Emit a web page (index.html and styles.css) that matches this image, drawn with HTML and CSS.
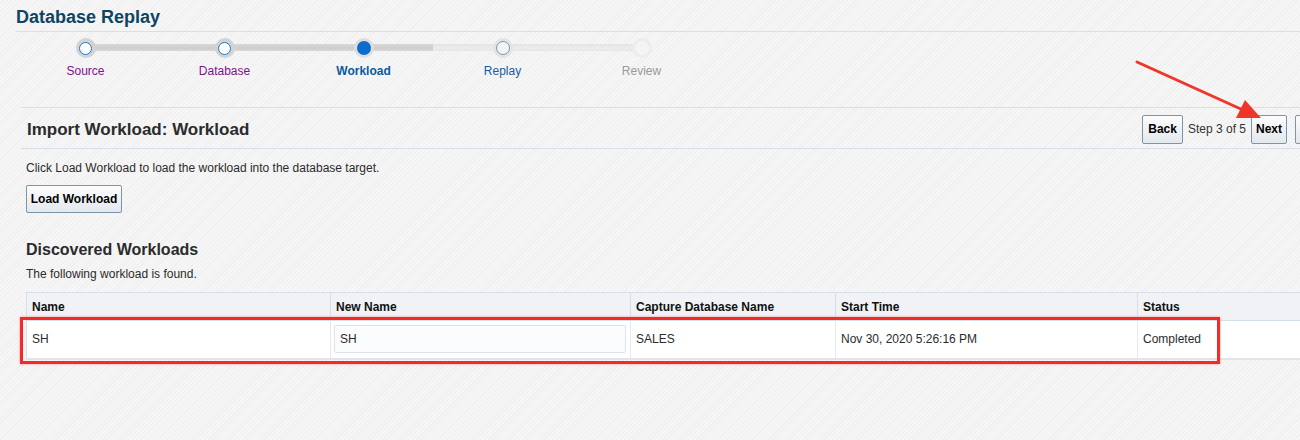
FILE: index.html
```html
<!DOCTYPE html>
<html>
<head>
<meta charset="utf-8">
<link rel="stylesheet" href="styles.css">
</head>
<body>
<div class="page">
  <h1 class="app-title">Database Replay</h1>
  <div class="train">
    <div class="step done first"><span class="dot"></span><span class="lbl">Source</span></div>
    <div class="step done"><span class="dot"></span><span class="lbl">Database</span></div>
    <div class="step current"><span class="dot"></span><span class="lbl">Workload</span></div>
    <div class="step next"><span class="dot"></span><span class="lbl">Replay</span></div>
    <div class="step off last"><span class="dot"></span><span class="lbl">Review</span></div>
  </div>
  <div class="head-row">
    <h2 class="page-title">Import Workload: Workload</h2>
    <div class="nav">
      <button class="btn">Back</button>
      <span class="step-of">Step 3 of 5</span>
      <button class="btn btn-next">Next</button>
      <button class="btn btn-cut" aria-label="Finish"></button>
    </div>
  </div>
  <div class="content">
    <p class="txt first-txt">Click Load Workload to load the workload into the database target.</p>
    <button class="btn btn-load">Load Workload</button>
    <h3 class="sub-title">Discovered Workloads</h3>
    <p class="txt">The following workload is found.</p>
    <div class="table-wrap">
      <table class="grid">
        <colgroup>
          <col class="c1"><col class="c2"><col class="c3"><col class="c4"><col class="c5">
        </colgroup>
        <thead>
          <tr><th>Name</th><th>New Name</th><th>Capture Database Name</th><th>Start Time</th><th>Status</th></tr>
        </thead>
        <tbody>
          <tr>
            <td>SH</td>
            <td><div class="inp">SH</div></td>
            <td>SALES</td>
            <td>Nov 30, 2020 5:26:16 PM</td>
            <td>Completed</td>
          </tr>
        </tbody>
      </table>
      <div class="highlight"></div>
    </div>
  </div>
  <svg class="arrow" width="1300" height="440" viewBox="0 0 1300 440">
    <line x1="1137" y1="62" x2="1243" y2="110" stroke="#f0352b" stroke-width="3" stroke-linecap="round"/>
    <polygon points="1261,118 1236,118 1245,100" fill="#f0352b"/>
  </svg>
</div>
</body>
</html>
```
FILE: styles.css
```css
html, body {
  margin: 0;
  padding: 0;
  overflow: hidden;
}
body {
  font-family: "Liberation Sans", Arial, sans-serif;
  color: #333;
  background-color: #f4f4f4;
  background-image: repeating-linear-gradient(135deg, #f6f6f6 0px, #f6f6f6 2px, #efefef 2px, #efefef 3px);
  width: 1340px;
  height: 440px;
}
.page {
  position: relative;
  width: 1340px;
  height: 440px;
}
.app-title {
  margin: 0 0 0 16px;
  padding-top: 6px;
  height: 25px;
  font-size: 18px;
  line-height: 22px;
  font-weight: bold;
  color: #0e4463;
  border-bottom: 1px solid #d5e0ea;
}
.train {
  display: flex;
  padding: 6px 0 0 16px;
  height: 69px;
  box-sizing: content-box;
}
.step {
  width: 139px;
  position: relative;
  display: flex;
  flex-direction: column;
  align-items: center;
}
.step::before, .step::after {
  content: "";
  position: absolute;
  top: 6px;
  height: 7px;
  width: 50%;
  background: linear-gradient(#d8d8d8, #cdcdcd 60%, #d9d9d9);
}
.step::before { left: 0; }
.step::after { right: 0; }
.step.first::before, .step.last::after { display: none; }
.step.next::before, .step.next::after, .step.off::before {
  background: linear-gradient(#e4e4e4, #ececec 60%, #e6e6e6);
}
.dot {
  position: relative;
  z-index: 1;
  width: 20px;
  height: 20px;
  border-radius: 50%;
  background: #d3d3d3;
  display: flex;
  align-items: center;
  justify-content: center;
}
.dot::after {
  content: "";
  width: 11px;
  height: 11px;
  border-radius: 50%;
  background: #fff;
  border: 1.5px solid #137cd6;
}
.current .dot { background: #dedede; }
.current .dot::after {
  width: 14px;
  height: 14px;
  border: none;
  background: #0b6ccc;
}
.next .dot { background: #e4e4e4; }
.next .dot::after {
  border: 1px solid #7f95ad;
  background: #f2f4f7;
  width: 12px;
  height: 12px;
}
.off .dot { background: #ececec; }
.off .dot::after {
  border: none;
  background: #f3f4f6;
  width: 14px;
  height: 14px;
}
.lbl {
  margin-top: 6px;
  font-size: 12px;
  line-height: 14px;
}
.done .lbl { color: #7e1386; }
.current .lbl { color: #0a5a9c; font-weight: bold; }
.next .lbl { color: #1a5c9c; }
.off .lbl { color: #9a9a9a; }

.head-row {
  margin-left: 21px;
  border-top: 1px solid #d5e0ea;
  border-bottom: 1px solid #d5e0ea;
  height: 40px;
  display: flex;
  align-items: center;
  justify-content: space-between;
}
.page-title {
  margin: 0 0 0 6px;
  padding-top: 3px;
  font-size: 17px;
  font-weight: bold;
  color: #2b2b2b;
}
.nav {
  display: flex;
  align-items: center;
  margin-right: 15px;
  padding-top: 2px;
}
.btn {
  font-family: "Liberation Sans", Arial, sans-serif;
  font-size: 12px;
  font-weight: bold;
  color: #000;
  height: 29px;
  padding: 0 5px;
  border: 1px solid #7d95ab;
  border-radius: 2px;
  background: linear-gradient(#fbfcfd, #e3e8ed);
}
.btn-next {
  padding: 0 4px;
}
.step-of {
  font-size: 12px;
  color: #333;
  margin: 0 5px;
}
.btn-cut {
  margin-left: 8px;
  width: 30px;
}
.content {
  padding-left: 26px;
}
.txt {
  margin: 0;
  font-size: 12px;
  line-height: 14px;
  color: #2b2b2b;
}
.first-txt { padding-top: 12px; }
.btn-load {
  margin-top: 10px;
  height: 28px;
  width: 96px;
  padding: 0;
}
.sub-title {
  margin: 27px 0 7px;
  font-size: 16px;
  line-height: 20px;
  font-weight: bold;
  color: #2b2b2b;
}
.table-wrap {
  position: relative;
  margin-top: 11px;
  width: 1320px;
}
.grid {
  border-collapse: collapse;
  table-layout: fixed;
  width: 1304px;
  font-size: 12px;
  border-left: 1px solid #d5dfe7;
}
.c1 { width: 304px; }
.c2 { width: 300px; }
.c3 { width: 205px; }
.c4 { width: 302px; }
.c5 { width: 193px; }
.grid th {
  text-align: left;
  height: 28px;
  padding: 1px 5px 0;
  background: #f0f2f5;
  color: #111;
  font-weight: bold;
  border: 1px solid #d5dfe7;
  border-left: none;
  vertical-align: middle;
  box-sizing: border-box;
}
.grid td {
  height: 38px;
  padding: 0 5px;
  background: #fff;
  color: #2b2b2b;
  border-right: 1px solid #e3e9ee;
  border-bottom: 2px solid #dfe5ea;
  box-sizing: border-box;
}
.inp {
  height: 28px;
  box-sizing: border-box;
  border: 1px solid #dde3e9;
  border-radius: 2px;
  background: #fbfcfd;
  padding-left: 5px;
  line-height: 26px;
  width: 292px;
  margin-left: -2px;
}
.highlight {
  position: absolute;
  left: -6px;
  top: 25px;
  width: 1200px;
  height: 47px;
  box-sizing: border-box;
  border: 3px solid #f52a26;
  box-shadow: 0 0 2px rgba(245, 42, 38, 0.5);
}
.arrow {
  position: absolute;
  left: 0;
  top: 0;
  pointer-events: none;
}
```
